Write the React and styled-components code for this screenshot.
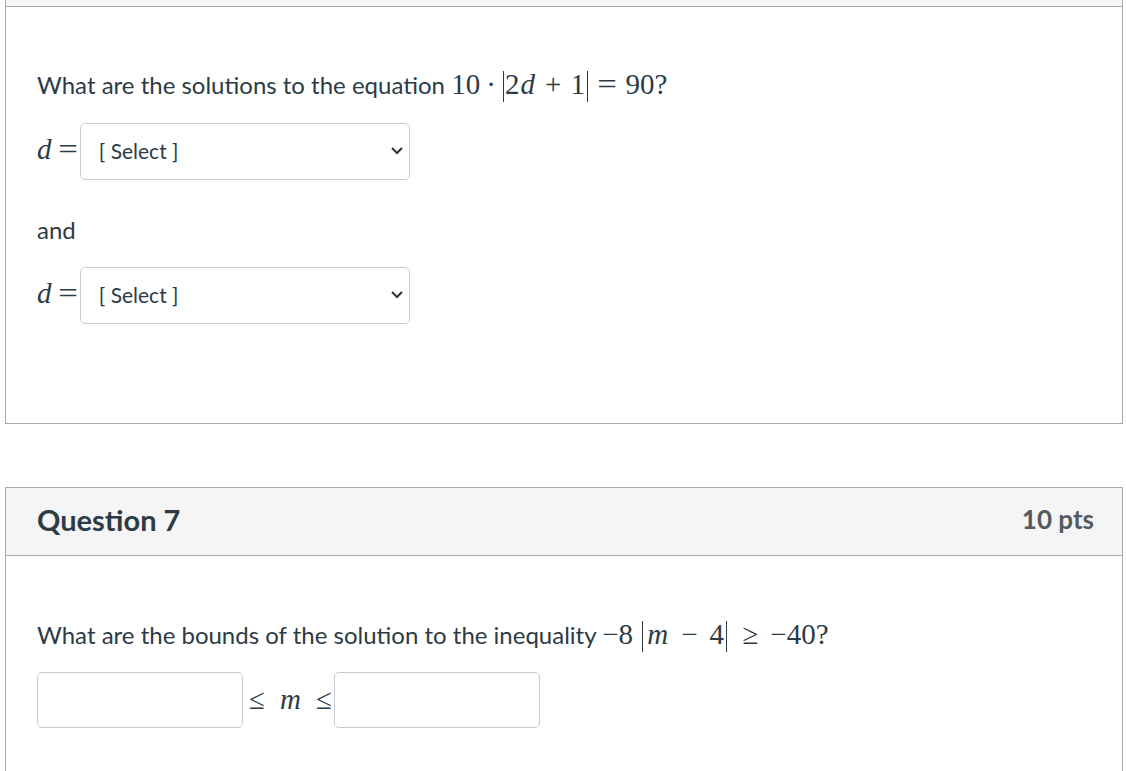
import React from "react";
import styled, { createGlobalStyle } from "styled-components";

const Global = createGlobalStyle`
  html, body { margin: 0; padding: 0; background: #fff; }
  body { font-family: Lato, "Noto Sans", sans-serif; color: #2d3b45; overflow: hidden; }
`;

const Page = styled.div`
  width: 1118px;
  padding-left: 5px;
  display: flex;
  flex-direction: column;
  gap: 63px;
`;

const Card = styled.section`
  border: 1px solid #a9a9a9;
  margin-top: ${(p) => p.$offset || 0}px;
`;

const Header = styled.header`
  height: 68px;
  box-sizing: border-box;
  background: #f5f5f5;
  border-bottom: 1px solid #a9a9a9;
  display: flex;
  align-items: center;
  justify-content: space-between;
  padding: 0 28px 5px 31px;
`;

const Title = styled.h2`
  margin: 0;
  font-size: 29px;
  font-weight: 700;
  color: #2d3b45;
`;

const Points = styled.span`
  font-size: 26px;
  font-weight: 700;
  color: #555a5e;
`;

const Body = styled.div`
  padding: ${(p) => p.$top}px 31px ${(p) => p.$bottom}px 31px;
  display: flex;
  flex-direction: column;
`;

const Para = styled.p`
  margin: 0 0 ${(p) => p.$after || 0}px 0;
  font-size: 24px;
  line-height: 33px;
  color: #2d3b45;
`;

const Math = styled.span`
  font-family: "Liberation Serif", "DejaVu Serif", serif;
  font-size: 29px;
  color: #2d3b45;
  white-space: nowrap;
  margin: ${(p) => p.$m || "0"};
`;

const Var = styled.i`
  font-style: italic;
  margin: 0 ${(p) => p.$s ?? 1}px;
`;

const Op = styled.span`
  margin: 0 ${(p) => p.$r ?? p.$s ?? 7}px 0 ${(p) => p.$l ?? p.$s ?? 7}px;
`;

const Wide = styled.span`
  display: inline-block;
  transform: scaleX(1.2);
`;

const Bar = styled.span`
  display: inline-block;
  width: 1.3px;
  height: 31px;
  background: #2d3b45;
  vertical-align: -8px;
  margin: 0 ${(p) => p.$l ?? 2}px 0 ${(p) => p.$r ?? 2}px;
`;

const Row = styled.div`
  display: flex;
  align-items: baseline;
  margin-bottom: ${(p) => p.$after || 0}px;
`;

const SelectBox = styled.div`
  width: 330px;
  height: 57px;
  box-sizing: border-box;
  border: 1px solid #c7cdd1;
  border-radius: 5px;
  background: #fff;
  display: flex;
  align-items: center;
  justify-content: space-between;
  padding: 0 5px 3px 18px;
  font-size: 21px;
  color: #2d3b45;
`;

const Input = styled.div`
  width: 206px;
  height: 56px;
  box-sizing: border-box;
  border: 1px solid #c7cdd1;
  border-radius: 5px;
  background: #fff;
  display: flex;
  align-items: center;
  font-size: 21px;
  &::before { content: "\\200b"; }
`;

const Chevron = () => (
  <svg width="14" height="10" viewBox="0 0 14 10">
    <polyline points="2,3 7,8 12,3" fill="none" stroke="#2d3b45" strokeWidth="2.2" />
  </svg>
);

const Select = () => (
  <SelectBox>
    <span>[ Select ]</span>
    <Chevron />
  </SelectBox>
);

const DEq = () => (
  <Math>
    <Var $s={0}>d</Var>
    <Op $l={8} $r={4}>
      <Wide>=</Wide>
    </Op>
  </Math>
);

export default function App() {
  return (
    <>
      <Global />
      <Page>
        <Card $offset={-62}>
          <Header />
          <Body $top={61} $bottom={99}>
            <Para $after={21}>
              What are the solutions to the equation{" "}
              <Math>
                10<Op $s={6}>·</Op>
                <Bar $r={1} $l={1} />2<Var>d</Var>
                <Op $s={9}>+</Op>1<Bar $r={2} $l={1} />
                <Op $s={10}>
                  <Wide>=</Wide>
                </Op>
                90?
              </Math>
            </Para>
            <Row $after={33}>
              <DEq />
              <Select />
            </Row>
            <Para $after={21}>and</Para>
            <Row>
              <DEq />
              <Select />
            </Row>
          </Body>
        </Card>
        <Card>
          <Header>
            <Title>Question 7</Title>
            <Points>10 pts</Points>
          </Header>
          <Body $top={62} $bottom={60}>
            <Para $after={20}>
              What are the bounds of the solution to the inequality{" "}
              <Math>
                −8<Bar $r={9} $l={3} />
                <Var>m</Var>
                <Op $s={12}>−</Op>4<Bar $r={2} $l={3} />
                <Op $s={12}>≥</Op>−40?
              </Math>
            </Para>
            <Row>
              <Input />
              <Math $m="0 2px 0 6px">
                ≤<Op $s={14}>
                  <Var>m</Var>
                </Op>
                ≤
              </Math>
              <Input />
            </Row>
          </Body>
        </Card>
      </Page>
    </>
  );
}
